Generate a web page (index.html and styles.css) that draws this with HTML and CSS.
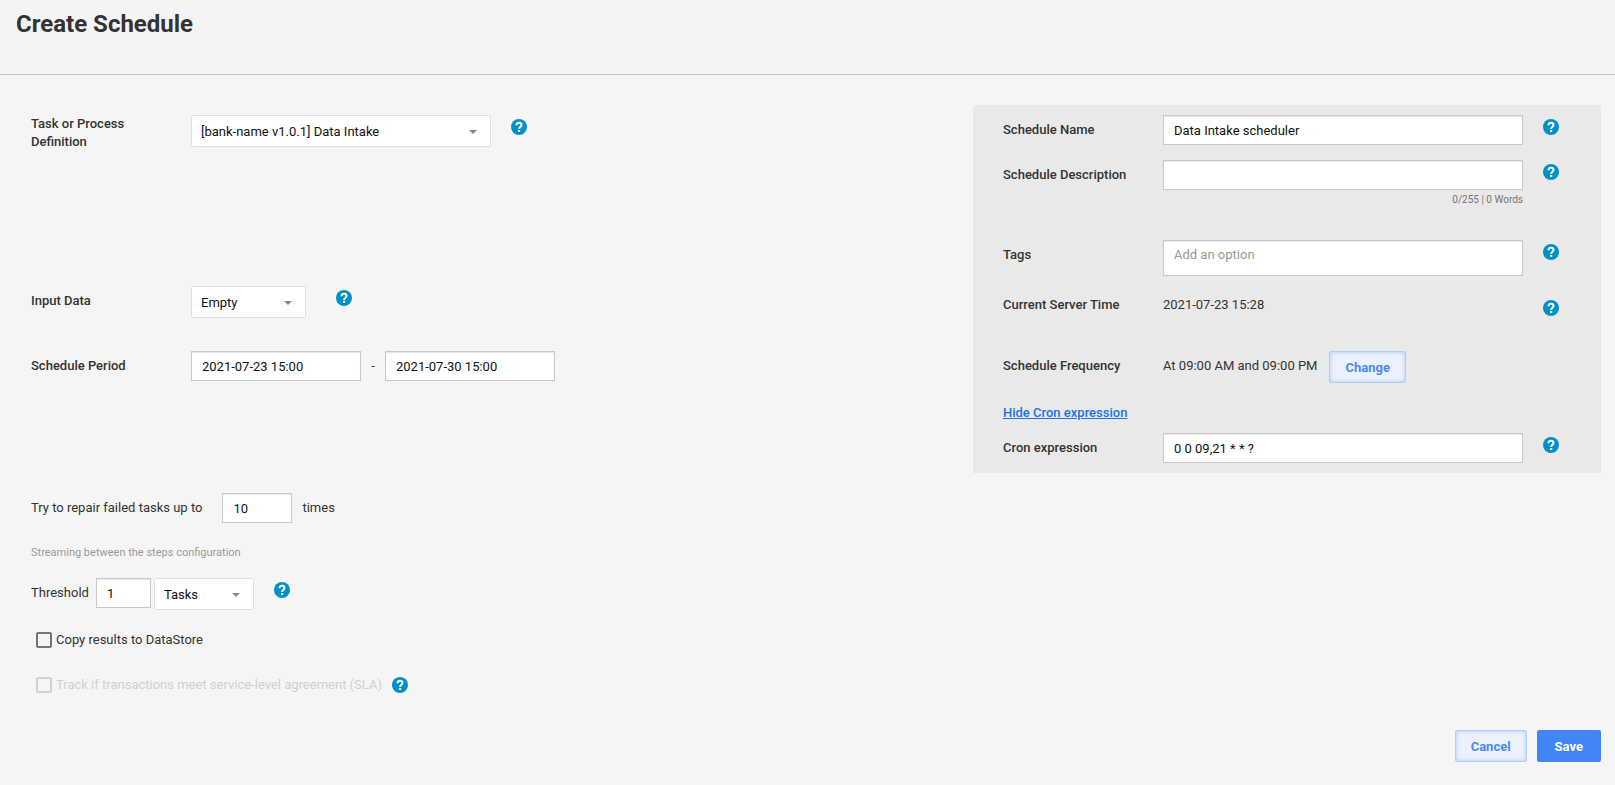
FILE: index.html
```
<!DOCTYPE html>
<html lang="en">
	<head>
		<meta charset="UTF-8">
		<meta name="viewport" content="width=device-width,initial-scale=1">
		<title>Create Schedule</title>
		<link rel="stylesheet" href="styles.css">
	</head>
	<body>
		<svg class="sprite" aria-hidden="true">
			<symbol id="help" viewBox="0 0 16 16">
				<circle cx="8" cy="8" r="8"/>
				<path d="M5.5 6.2C5.5 4.6 6.6 3.7 8 3.7s2.5.9 2.5 2.2c0 1.9-2.4 1.9-2.4 4" fill="none" stroke="#fff" stroke-width="2"/>
				<path d="M7 11h2.2v2H7z" fill="#fff"/>
			</symbol>
		</svg>

		<header class="header">
			<h1 class="title">Create Schedule</h1>
		</header>

		<form class="form">
			<div class="columns">
				<div class="main">
					<div class="row row-definition">
						<label class="label label-multi" for="definition">Task or Process Definition</label>
						<span class="select select-wide">
							<select id="definition"><option>[bank-name v1.0.1] Data Intake</option></select>
						</span>
						<button type="button" class="help" aria-label="Help"><svg><use href="#help"/></svg></button>
					</div>
					<div class="row row-input-data">
						<label class="label" for="input-data">Input Data</label>
						<span class="select select-data">
							<select id="input-data"><option>Empty</option></select>
						</span>
						<button type="button" class="help help-far" aria-label="Help"><svg><use href="#help"/></svg></button>
					</div>
					<div class="row row-period">
						<label class="label" for="period-from">Schedule Period</label>
						<input class="input input-date" type="text" id="period-from" value="2021-07-23 15:00">
						<span class="dash">-</span>
						<input class="input input-date" type="text" aria-label="Schedule Period end" value="2021-07-30 15:00">
					</div>
					<div class="row row-repair">
						<label class="text" for="repair">Try to repair failed tasks up to</label>
						<input class="input input-repair" type="text" id="repair" value="10">
						<span class="text">times</span>
					</div>
					<p class="hint">Streaming between the steps configuration</p>
					<div class="row row-threshold">
						<label class="text" for="threshold">Threshold</label>
						<input class="input input-threshold" type="text" id="threshold" value="1">
						<span class="select select-unit">
							<select aria-label="Threshold unit"><option>Tasks</option></select>
						</span>
						<button type="button" class="help" aria-label="Help"><svg><use href="#help"/></svg></button>
					</div>
					<div class="check">
						<input type="checkbox" id="copy">
						<label for="copy">Copy results to DataStore</label>
					</div>
					<div class="check check-disabled">
						<input type="checkbox" id="sla" disabled>
						<label for="sla">Track if transactions meet service-level agreement (SLA)</label>
						<button type="button" class="help" aria-label="Help"><svg><use href="#help"/></svg></button>
					</div>
				</div>

				<div class="panel">
					<div class="row">
						<label class="label" for="name">Schedule Name</label>
						<input class="input" type="text" id="name" value="Data Intake scheduler">
						<button type="button" class="help" aria-label="Help"><svg><use href="#help"/></svg></button>
					</div>
					<div class="row row-description">
						<label class="label" for="description">Schedule Description</label>
						<div class="field">
							<input class="input" type="text" id="description">
							<span class="counter">0/255 | 0 Words</span>
						</div>
						<button type="button" class="help" aria-label="Help"><svg><use href="#help"/></svg></button>
					</div>
					<div class="row row-tags">
						<label class="label" for="tags">Tags</label>
						<input class="input input-tags" type="text" id="tags" placeholder="Add an option">
						<button type="button" class="help" aria-label="Help"><svg><use href="#help"/></svg></button>
					</div>
					<div class="row row-time">
						<span class="label">Current Server Time</span>
						<span class="text value">2021-07-23 15:28</span>
						<button type="button" class="help" aria-label="Help"><svg><use href="#help"/></svg></button>
					</div>
					<div class="row row-frequency">
						<span class="label">Schedule Frequency</span>
						<span class="text">At 09:00 AM and 09:00 PM</span>
						<button type="button" class="btn btn-light">Change</button>
					</div>
					<a class="link" href="#">Hide Cron expression</a>
					<div class="row row-cron">
						<label class="label" for="cron">Cron expression</label>
						<input class="input" type="text" id="cron" value="0 0 09,21 * * ?">
						<button type="button" class="help" aria-label="Help"><svg><use href="#help"/></svg></button>
					</div>
				</div>
			</div>

			<div class="actions">
				<button type="button" class="btn btn-light">Cancel</button>
				<button type="submit" class="btn btn-primary">Save</button>
			</div>
		</form>
	</body>
</html>
```
FILE: styles.css
```
* {
	box-sizing: border-box;
}
body {
	margin: 0;
	background: #f5f5f5;
	color: #333;
	font: 13px/18px Roboto, "Liberation Sans", sans-serif;
}
input,
select,
button {
	font: inherit;
}
.sprite {
	position: absolute;
	width: 0;
	height: 0;
}

/* header */
.header {
	height: 75px;
	padding: 8px 16px;
	background: #f4f4f4;
	border-bottom: 1px solid #c4c4c4;
}
.title {
	margin: 0;
	font-size: 24px;
	line-height: 32px;
	font-weight: 700;
}

/* layout */
.form {
	padding: 30px 14px 20px 31px;
}
.columns {
	display: flex;
	align-items: flex-start;
}
.main {
	flex: 1;
	padding-top: 10px;
}
.panel {
	width: 40%;
	padding: 10px 42px 10px 30px;
	background: #e9e9e9;
}
.row {
	display: flex;
	align-items: flex-start;
}
.label {
	flex: none;
	width: 160px;
	padding: 6px 20px 0 0;
	font-weight: 500;
}
.label-multi {
	padding: 0 40px 0 0;
}
.text {
	padding-top: 6px;
}

/* controls */
.input {
	flex: 1;
	min-width: 0;
	height: 30px;
	padding: 0 10px;
	border: 1px solid #c8c8c8;
	border-radius: 0;
	background: #fff;
	box-shadow: inset 0 1px 1px #e8e8e8;
	color: #111;
	outline: none;
}
.input::placeholder {
	color: #999;
	opacity: 1;
}
.select {
	position: relative;
	flex: none;
	height: 32px;
}
.select select {
	width: 100%;
	height: 32px;
	padding: 2px 30px 0 9px;
	border: 1px solid #dfdfdf;
	border-radius: 2px;
	background: #fff;
	color: #111;
	-webkit-appearance: none;
	appearance: none;
	outline: none;
}
.select::after {
	content: "";
	position: absolute;
	top: 15px;
	right: 14px;
	border: 4px solid transparent;
	border-top-color: #888;
	border-bottom: 0;
	pointer-events: none;
}
.help {
	flex: none;
	width: 16px;
	height: 16px;
	margin: 4px 0 0 20px;
	padding: 0;
	border: 0;
	background: none;
	cursor: pointer;
}
.help svg {
	display: block;
	width: 16px;
	height: 16px;
	fill: #0090c8;
}
.btn {
	height: 32px;
	padding: 1px 16px 0;
	border: 1px solid transparent;
	border-radius: 2px;
	font-weight: 700;
	cursor: pointer;
}
.btn-light {
	padding: 1px 15px 0;
	border-color: #b0cdfb;
	background: #ebf2fe;
	box-shadow: inset 0 0 4px #a4c5fb;
	color: #4d8af0;
}
.btn-primary {
	padding: 1px 17px 0;
	background: #4285f4;
	color: #fff;
}

/* left column */
.select-wide {
	width: 300px;
}
.select-data {
	width: 115px;
}
.select-unit {
	width: 100px;
}
.row-definition {
	min-height: 171px;
}
.help-far {
	margin-left: 30px;
}
.row-period {
	margin-top: 33px;
}
.input-date {
	flex: none;
	width: 170px;
}
.dash {
	width: 24px;
	padding-top: 6px;
	text-align: center;
}
.row-repair {
	gap: 10px;
	margin-top: 112px;
}
.input-repair {
	flex: none;
	width: 70px;
	margin-left: 10px;
}
.hint {
	margin: 21px 0 16px;
	color: #999;
	font-size: 11px;
}
.row-threshold .text {
	padding-right: 7px;
}
.input-threshold {
	flex: none;
	width: 55px;
	margin-right: 3px;
}
.check {
	display: flex;
	align-items: center;
	gap: 4px;
	height: 18px;
	margin: 21px 0 0 5px;
}
.check input {
	width: 16px;
	height: 16px;
	margin: 0;
	border: 2px solid #757575;
	border-radius: 2px;
	-webkit-appearance: none;
	appearance: none;
}
.check-disabled {
	margin-top: 27px;
	color: #d0d0d0;
}
.check-disabled input {
	border-color: #d0d0d0;
}
.check .help {
	margin: 0 0 0 6px;
}

/* right column */
.row-description {
	margin-top: 15px;
}
.field {
	display: flex;
	flex: 1;
	flex-direction: column;
}
.field .input {
	flex: none;
}
.counter {
	padding-top: 1px;
	color: #757575;
	font-size: 10px;
	text-align: right;
}
.row-tags {
	margin-top: 31px;
}
.input-tags {
	height: 36px;
	padding-bottom: 8px;
}
.row-time {
	margin-top: 14px;
}
.row-time .help {
	margin-top: 10px;
}
.value {
	flex: 1;
}
.row-frequency {
	margin-top: 35px;
}
.row-frequency .btn {
	margin-left: 12px;
}
.link {
	display: block;
	margin-top: 21px;
	color: #1a73e8;
	font-weight: 500;
}
.row-cron {
	margin-top: 11px;
}

/* footer */
.actions {
	display: flex;
	justify-content: flex-end;
	gap: 10px;
	margin-top: 36px;
}
```
